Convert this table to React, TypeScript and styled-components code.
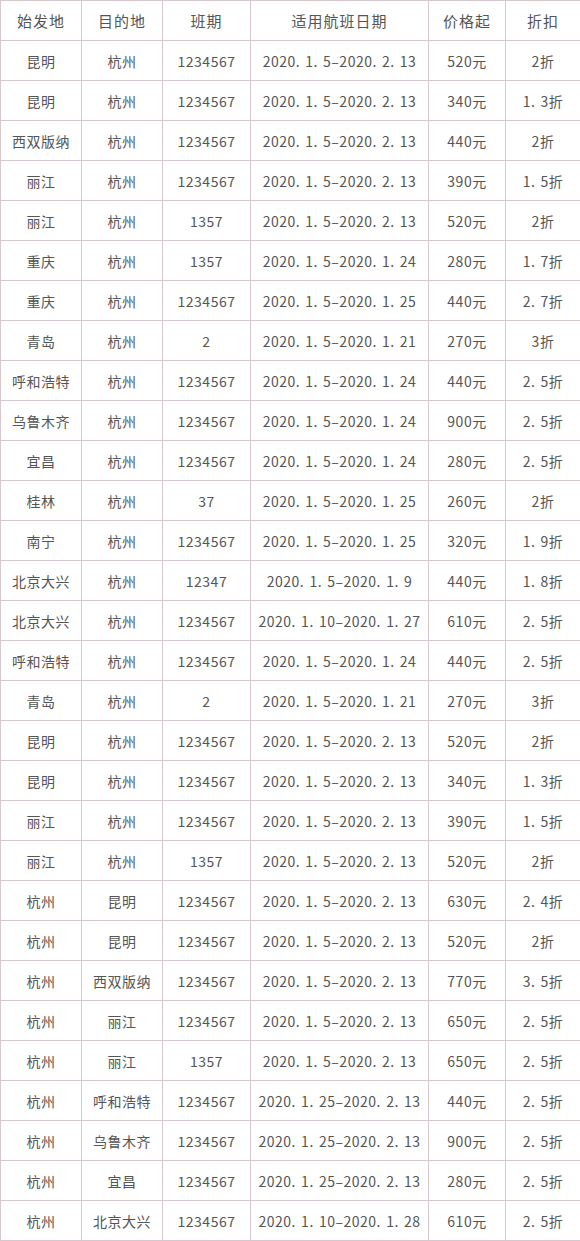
import React from "react";
import styled, { createGlobalStyle } from "styled-components";

const Global = createGlobalStyle`
  html, body { margin: 0; padding: 0; background: #fff; }
  body { font-family: "Noto Sans CJK SC", "Noto Sans", sans-serif; }
`;

const Table = styled.table`
  border-collapse: collapse;
  table-layout: fixed;
  width: 580px;
  color: #555;
  font-size: 14px;
`;

const Cell = styled.td<{ $head?: boolean }>`
  border: 1px solid #d8c8ce;
  height: 39px;
  padding: 0;
  text-align: center;
  vertical-align: middle;
  white-space: nowrap;
  letter-spacing: ${(p) => (p.$head ? "1px" : "0.5px")};
  font-size: ${(p) => (p.$head ? "15px" : "14px")};
  font-weight: 400;
`;

const widths = [81, 81, 88, 178, 77, 75];
const head = ["始发地", "目的地", "班期", "适用航班日期", "价格起", "折扣"];

const d = (s: string) => s.replace(/\./g, ".\u2004").replace(/-/g, "–");

const rows: string[][] = [
  ["昆明", "杭州", "1234567", "2020.1.5-2020.2.13", "520元", "2折"],
  ["昆明", "杭州", "1234567", "2020.1.5-2020.2.13", "340元", "1.3折"],
  ["西双版纳", "杭州", "1234567", "2020.1.5-2020.2.13", "440元", "2折"],
  ["丽江", "杭州", "1234567", "2020.1.5-2020.2.13", "390元", "1.5折"],
  ["丽江", "杭州", "1357", "2020.1.5-2020.2.13", "520元", "2折"],
  ["重庆", "杭州", "1357", "2020.1.5-2020.1.24", "280元", "1.7折"],
  ["重庆", "杭州", "1234567", "2020.1.5-2020.1.25", "440元", "2.7折"],
  ["青岛", "杭州", "2", "2020.1.5-2020.1.21", "270元", "3折"],
  ["呼和浩特", "杭州", "1234567", "2020.1.5-2020.1.24", "440元", "2.5折"],
  ["乌鲁木齐", "杭州", "1234567", "2020.1.5-2020.1.24", "900元", "2.5折"],
  ["宜昌", "杭州", "1234567", "2020.1.5-2020.1.24", "280元", "2.5折"],
  ["桂林", "杭州", "37", "2020.1.5-2020.1.25", "260元", "2折"],
  ["南宁", "杭州", "1234567", "2020.1.5-2020.1.25", "320元", "1.9折"],
  ["北京大兴", "杭州", "12347", "2020.1.5-2020.1.9", "440元", "1.8折"],
  ["北京大兴", "杭州", "1234567", "2020.1.10-2020.1.27", "610元", "2.5折"],
  ["呼和浩特", "杭州", "1234567", "2020.1.5-2020.1.24", "440元", "2.5折"],
  ["青岛", "杭州", "2", "2020.1.5-2020.1.21", "270元", "3折"],
  ["昆明", "杭州", "1234567", "2020.1.5-2020.2.13", "520元", "2折"],
  ["昆明", "杭州", "1234567", "2020.1.5-2020.2.13", "340元", "1.3折"],
  ["丽江", "杭州", "1234567", "2020.1.5-2020.2.13", "390元", "1.5折"],
  ["丽江", "杭州", "1357", "2020.1.5-2020.2.13", "520元", "2折"],
  ["杭州", "昆明", "1234567", "2020.1.5-2020.2.13", "630元", "2.4折"],
  ["杭州", "昆明", "1234567", "2020.1.5-2020.2.13", "520元", "2折"],
  ["杭州", "西双版纳", "1234567", "2020.1.5-2020.2.13", "770元", "3.5折"],
  ["杭州", "丽江", "1234567", "2020.1.5-2020.2.13", "650元", "2.5折"],
  ["杭州", "丽江", "1357", "2020.1.5-2020.2.13", "650元", "2.5折"],
  ["杭州", "呼和浩特", "1234567", "2020.1.25-2020.2.13", "440元", "2.5折"],
  ["杭州", "乌鲁木齐", "1234567", "2020.1.25-2020.2.13", "900元", "2.5折"],
  ["杭州", "宜昌", "1234567", "2020.1.25-2020.2.13", "280元", "2.5折"],
  ["杭州", "北京大兴", "1234567", "2020.1.10-2020.1.28", "610元", "2.5折"],
];

export default function App() {
  return (
    <>
      <Global />
      <Table>
        <colgroup>
          {widths.map((w, i) => (
            <col key={i} style={{ width: w }} />
          ))}
        </colgroup>
        <tbody>
          <tr>
            {head.map((h) => (
              <Cell key={h} $head>
                {h}
              </Cell>
            ))}
          </tr>
          {rows.map((r, i) => (
            <tr key={i}>
              {r.map((c, j) => (
                <Cell key={j}>{d(c)}</Cell>
              ))}
            </tr>
          ))}
        </tbody>
      </Table>
    </>
  );
}
